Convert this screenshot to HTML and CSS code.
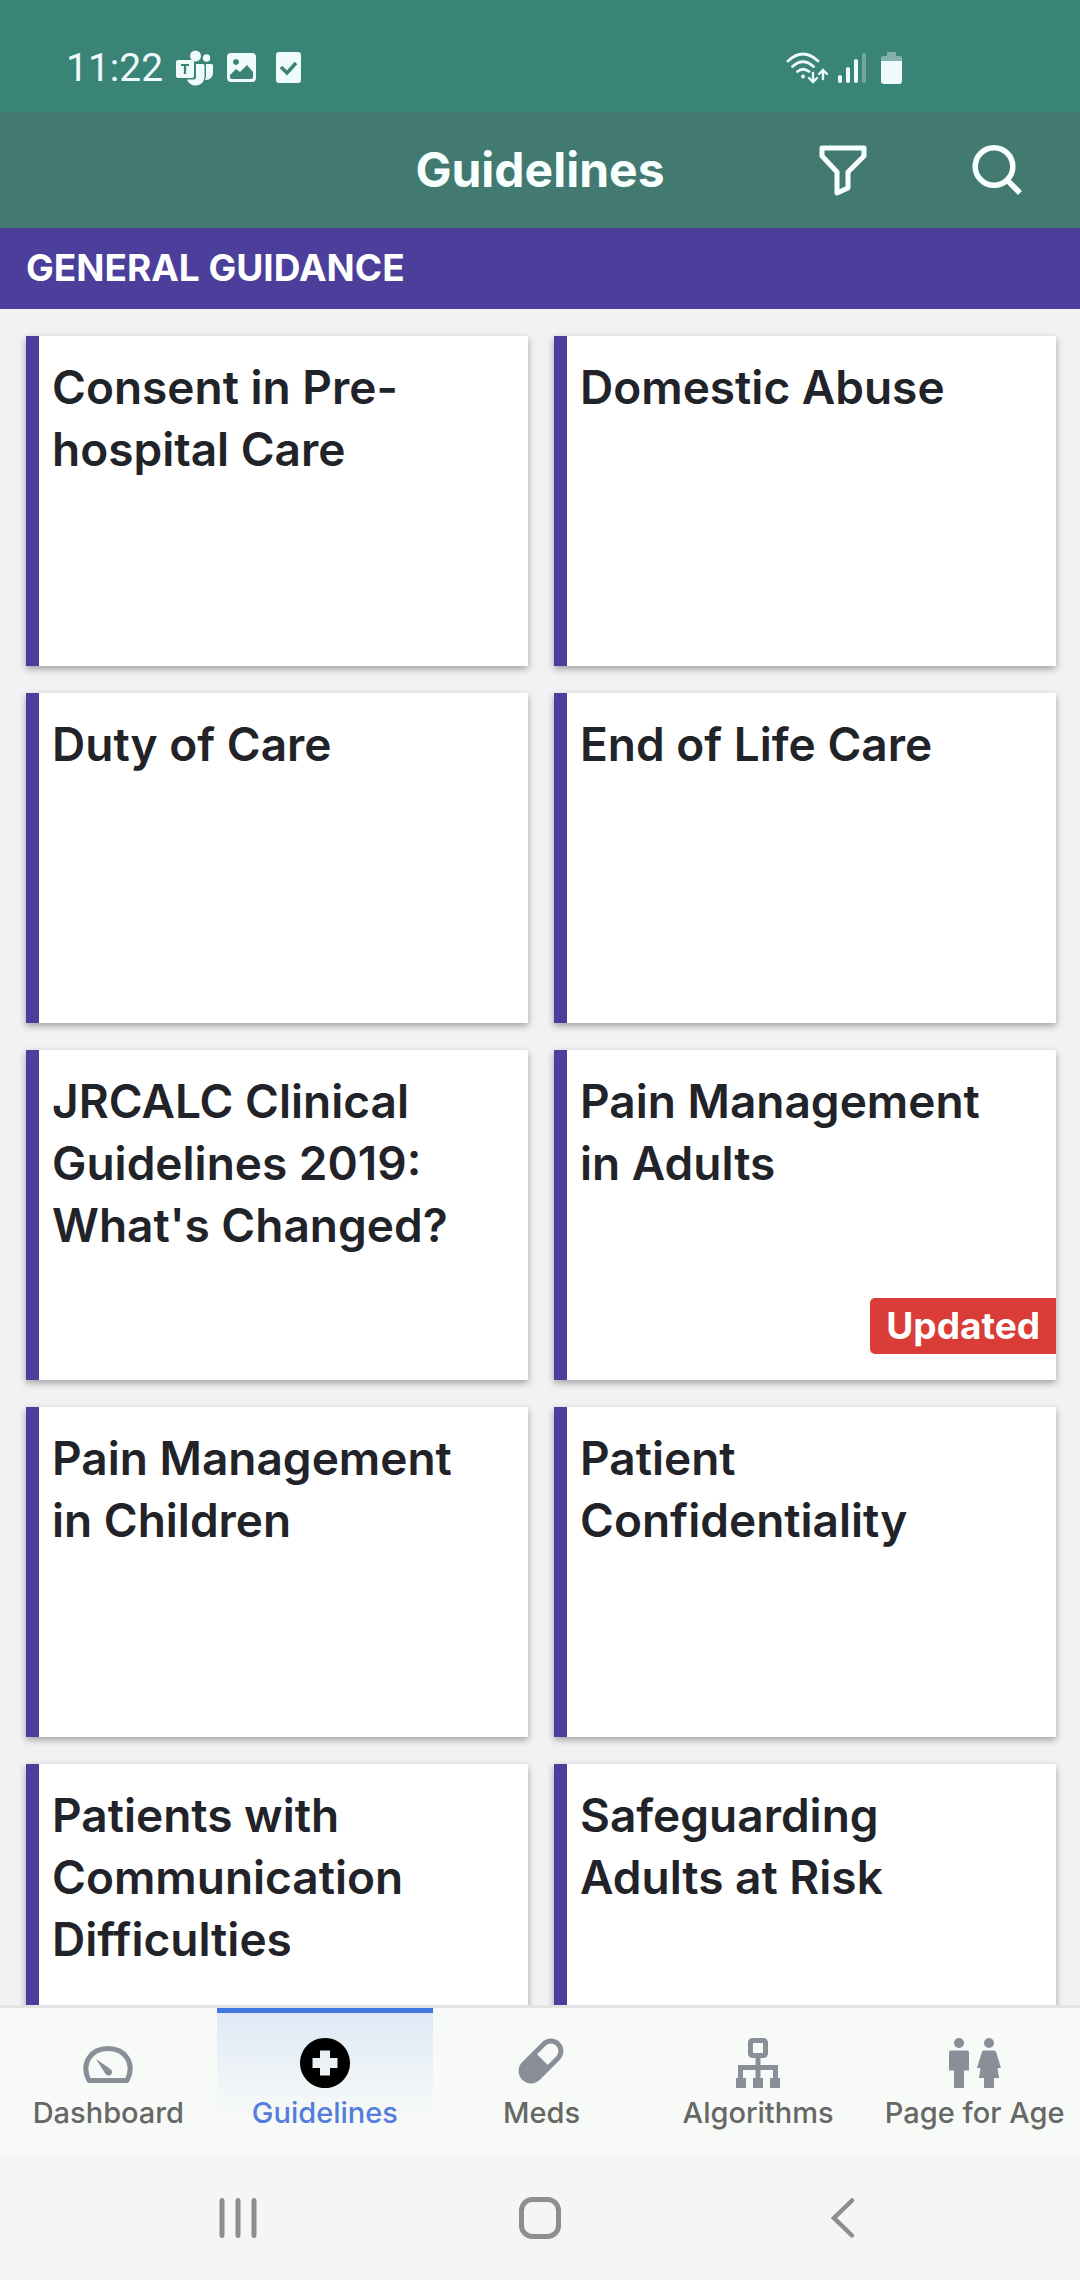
FILE: index.html
```html
<!DOCTYPE html>
<html lang="en">
<head>
<meta charset="utf-8">
<meta name="viewport" content="width=device-width, initial-scale=1">
<title>Guidelines</title>
<link rel="stylesheet" href="styles.css">
</head>
<body>
<div class="app">
  <div class="status">
    <div class="status-group">
      <span class="clock">11:22</span>
      <svg class="teams" width="38" height="36" viewBox="0 0 38 36" fill="currentColor" aria-hidden="true">
        <circle cx="19.500" cy="6" r="5.500"/><circle cx="30.500" cy="8" r="3.700"/>
        <path d="M30 14h5.500q1.500 0 1.500 1.500v7c0 4.500-3 7.800-8 7.500q1-2 1-4z"/>
        <path d="M20 14h7q1.500 0 1.500 1.500v11c0 5.500-3.500 9-9 9-4.300 0-7.200-2.500-8.400-6H18q2 0 2-2z"/>
        <rect x="0" y="10" width="18" height="18" rx="2"/>
        <path d="M5 15h8M9 15v9" fill="none" stroke="#3a8377" stroke-width="2.200"/>
      </svg>
      <svg class="gallery" width="30" height="30" viewBox="0 0 30 30" aria-hidden="true">
        <path fill="currentColor" fill-rule="evenodd" d="M4 0h21q4 0 4 4v21q0 4-4 4H4q-4 0-4-4V4q0-4 4-4zM3 22v2q0 2 2 2h19q2 0 2-2v-5l-6-7-7 7-4-3zM9 6a3 3 0 1 0 .01 0z"/>
      </svg>
      <svg width="26" height="32" viewBox="0 0 26 32" aria-hidden="true">
        <rect x="0" y="0" width="25" height="31" rx="3" fill="currentColor"/><path d="M5 15l6 6L20 11" fill="none" stroke="#3a8377" stroke-width="3.500"/>
      </svg>
    </div>
    <div class="status-group status-right">
      <svg width="44" height="34" viewBox="0 0 44 34" fill="none" stroke="currentColor" stroke-width="2.800" stroke-linecap="round" aria-hidden="true">
        <path d="M3 10Q18-4 33 10M7.500 15.500Q18 6 28.500 15.500M12.500 20.500Q18 16 24 20.500"/>
        <path stroke-width="2.400" d="M28 22v9m-4-4 4 4 4-4M38 28v-9m-4 4 4-4 4 4"/>
        <circle cx="18" cy="25.500" r="2" fill="currentColor" stroke="none"/>
      </svg>
      <svg width="30" height="32" viewBox="0 0 30 32" fill="currentColor" aria-hidden="true">
        <rect x="1" y="23" width="4" height="8" rx="2"/><rect x="9" y="15" width="4" height="16" rx="2"/><rect x="17" y="7" width="4" height="24" rx="2"/><rect x="25" y="1" width="4" height="30" rx="2" opacity=".3"/>
      </svg>
      <svg class="battery" width="22" height="34" viewBox="0 0 22 34" fill="currentColor" aria-hidden="true">
        <path opacity=".4" d="M0 10V7q0-2 2-2h4V2q0-1 1-1h7q1 0 1 1v3h4q2 0 2 2v3z"/><path d="M0 10h21v20q0 3-3 3H3q-3 0-3-3z"/>
      </svg>
    </div>
  </div>

  <header class="header">
    <h1 class="title">Guidelines</h1>
    <div class="actions">
      <button class="icon-button" type="button" aria-label="Filter">
        <svg width="50" height="52" viewBox="0 0 50 52" fill="none" stroke="currentColor" stroke-width="5" stroke-linejoin="round" aria-hidden="true"><path d="M4 4h42v8L30 28v16l-11 5V28L4 12z"/></svg>
      </button>
      <button class="icon-button" type="button" aria-label="Search">
        <svg width="50" height="52" viewBox="0 0 50 52" fill="none" stroke="currentColor" stroke-width="5.500" aria-hidden="true"><circle cx="22" cy="22.500" r="18.800"/><path d="M35 36l13 13"/></svg>
      </button>
    </div>
  </header>

  <main class="content">
    <h2 class="section">GENERAL GUIDANCE</h2>
    <ul class="cards">
      <li><a class="card" href="#">Consent in Pre-hospital Care</a></li>
      <li><a class="card" href="#">Domestic Abuse</a></li>
      <li><a class="card" href="#">Duty of Care</a></li>
      <li><a class="card" href="#">End of Life Care</a></li>
      <li><a class="card" href="#">JRCALC Clinical Guidelines 2019: What's Changed?</a></li>
      <li><a class="card" href="#">Pain Management in Adults<span class="badge">Updated</span></a></li>
      <li><a class="card" href="#">Pain Management in Children</a></li>
      <li><a class="card" href="#">Patient Confidentiality</a></li>
      <li><a class="card" href="#">Patients with Communication Difficulties</a></li>
      <li><a class="card" href="#">Safeguarding Adults at Risk</a></li>
    </ul>
  </main>

  <nav class="tabs" aria-label="Sections">
    <a class="tab" href="#">
      <svg class="tab-icon" viewBox="0 0 50 50" aria-hidden="true"><path d="M6 42.500C-3 24 9 10.500 25 10.500S53 24 44 42.500z" fill="none" stroke="currentColor" stroke-width="5" stroke-linejoin="round"/><path fill="currentColor" d="M13 21l14.500 10q3 3 .5 5.500t-5.500-.5z"/></svg>
      Dashboard
    </a>
    <a class="tab active" href="#" aria-current="page">
      <svg class="tab-icon" viewBox="0 0 50 50" aria-hidden="true"><path fill="#000" fill-rule="evenodd" d="M25 0a25 25 0 1 0 .01 0zM20 12.500h10V20h7.500v10H30v7.500H20V30h-7.500V20H20z"/></svg>
      Guidelines
    </a>
    <a class="tab" href="#">
      <svg class="tab-icon" viewBox="0 0 50 50" aria-hidden="true"><g transform="rotate(45 25 23)"><rect x="15" y="-1" width="20" height="48" rx="10" fill="none" stroke="currentColor" stroke-width="5"/><path fill="currentColor" d="M15 21h20v16a10 10 0 0 1-20 0z"/></g></svg>
      Meds
    </a>
    <a class="tab" href="#">
      <svg class="tab-icon" viewBox="0 0 50 50" aria-hidden="true"><rect x="17.500" y="2.500" width="15" height="15" rx="2" fill="none" stroke="currentColor" stroke-width="5"/><path d="M25 19v22M7.500 41V29.500h35V41" fill="none" stroke="currentColor" stroke-width="5"/><path fill="currentColor" d="M3 40h10v10H3zM20 40h10v10H20zM37 40h10v10H37z"/></svg>
      Algorithms
    </a>
    <a class="tab" href="#">
      <svg class="tab-icon wide" viewBox="0 0 54 50" fill="currentColor" aria-hidden="true"><circle cx="11" cy="5" r="5"/><circle cx="41" cy="5" r="5"/><path d="M3 12.500h16q2 0 2 2v18h-5V50H6V32.500H1v-18q0-2 2-2zM35.500 12.500h11q1.200 0 1.800 2L53 30h-3.500l1.500 10h-5v10H36V40h-5l1.500-10H29l4.700-15.500q.6-2 1.800-2z"/></svg>
      Page for Age
    </a>
  </nav>

  <div class="system">
    <button class="system-button" type="button" aria-label="Recent apps"><svg width="42" height="42" viewBox="0 0 42 42" fill="none" stroke="currentColor" stroke-width="5" stroke-linecap="round" aria-hidden="true"><path d="M5 3.500v35M21 3.500v35M37 3.500v35"/></svg></button>
    <button class="system-button" type="button" aria-label="Home"><svg width="42" height="42" viewBox="0 0 42 42" fill="none" stroke="currentColor" stroke-width="5" aria-hidden="true"><rect x="2.500" y="2.500" width="37" height="37" rx="11"/></svg></button>
    <button class="system-button" type="button" aria-label="Back"><svg width="42" height="42" viewBox="0 0 42 42" fill="none" stroke="currentColor" stroke-width="4.500" stroke-linecap="round" aria-hidden="true"><path d="M31 3.500L13 21l18 17.500"/></svg></button>
  </div>
</div>
</body>
</html>
```
FILE: styles.css
```css
* { box-sizing: border-box; }
body {
  margin: 0;
  font-family: Inter, "Liberation Sans", sans-serif;
  background: #f0f2f4;
  color: #212329;
}
h1, h2, ul { margin: 0; padding: 0; }
a { color: inherit; text-decoration: none; }
button { border: 0; padding: 0; background: none; color: inherit; }
svg { display: block; flex: none; }

.app { display: flex; flex-direction: column; height: 100vh; overflow: hidden; }

.status {
  display: flex;
  flex: none;
  justify-content: space-between;
  padding: 36px 177px 12px 66px;
  height: 112px;
  background: #3a8377;
  color: #effafa;
}
.status-group { display: flex; align-items: center; }
.clock { font: 400 39px/46px Roboto, sans-serif; }
.teams { margin-left: 13px; }
.gallery { margin: 0 19px 0 13px; }
.status-right { gap: 8px; }
.battery { margin-left: 6px; }

.header {
  display: grid;
  grid-template-columns: 1fr auto 1fr;
  align-items: center;
  flex: none;
  height: 116px;
  background: #427a71;
  color: #f8ffff;
}
.title { grid-column: 2; font-size: 48px; line-height: 58px; font-weight: 700; }
.actions { display: flex; justify-content: flex-end; gap: 104px; padding-right: 58px; }

.content { flex: 1; min-height: 0; overflow: hidden; }
.section {
  padding: 16px 26px 17px;
  background: #4b3f9b;
  color: #fff;
  font-size: 37px;
  line-height: 48px;
  font-weight: 700;
}
.cards {
  display: grid;
  grid-template-columns: 1fr 1fr;
  grid-auto-rows: 330px;
  gap: 27px 26px;
  padding: 27px 24px 27px 26px;
  list-style: none;
}
.card {
  display: block;
  position: relative;
  height: 100%;
  padding: 20px 40px 20px 13px;
  border-left: 13px solid #4b3f9b;
  background: #fff;
  box-shadow: 0 3px 7px rgba(0, 0, 0, .34);
  font-size: 46px;
  line-height: 62px;
  font-weight: 600;
}
.badge {
  position: absolute;
  right: 0;
  bottom: 26px;
  padding: 4px 16px;
  border-radius: 5px 0 0 5px;
  background: #da3c38;
  color: #fff;
  font-size: 37px;
  line-height: 48px;
  font-weight: 700;
}

.tabs {
  display: grid;
  grid-template-columns: repeat(5, 1fr);
  flex: none;
  margin-right: -3px;
  border-top: 3px solid #e3e5e5;
  background: #f8faf8;
}
.tab {
  display: flex;
  flex-direction: column;
  align-items: center;
  gap: 7px;
  padding: 25px 0 18px;
  border-top: 5px solid transparent;
  color: #656865;
  font-size: 29px;
  line-height: 36px;
  font-weight: 500;
  white-space: nowrap;
  height: 148px;
}
.tab-icon { width: 50px; height: 50px; color: #898e97; }
.wide { width: 54px; }
.active {
  border-top-color: #4077df;
  background: linear-gradient(#dfeaf6, #f8faf8 75%);
  color: #547ddd;
}

.system {
  display: grid;
  grid-template-columns: repeat(3, 1fr);
  align-items: center;
  flex: none;
  height: 124px;
  padding: 0 87px;
  background: #f5f5f5;
  color: #8e8e8e;
}
.system-button { display: flex; justify-content: center; }
```
